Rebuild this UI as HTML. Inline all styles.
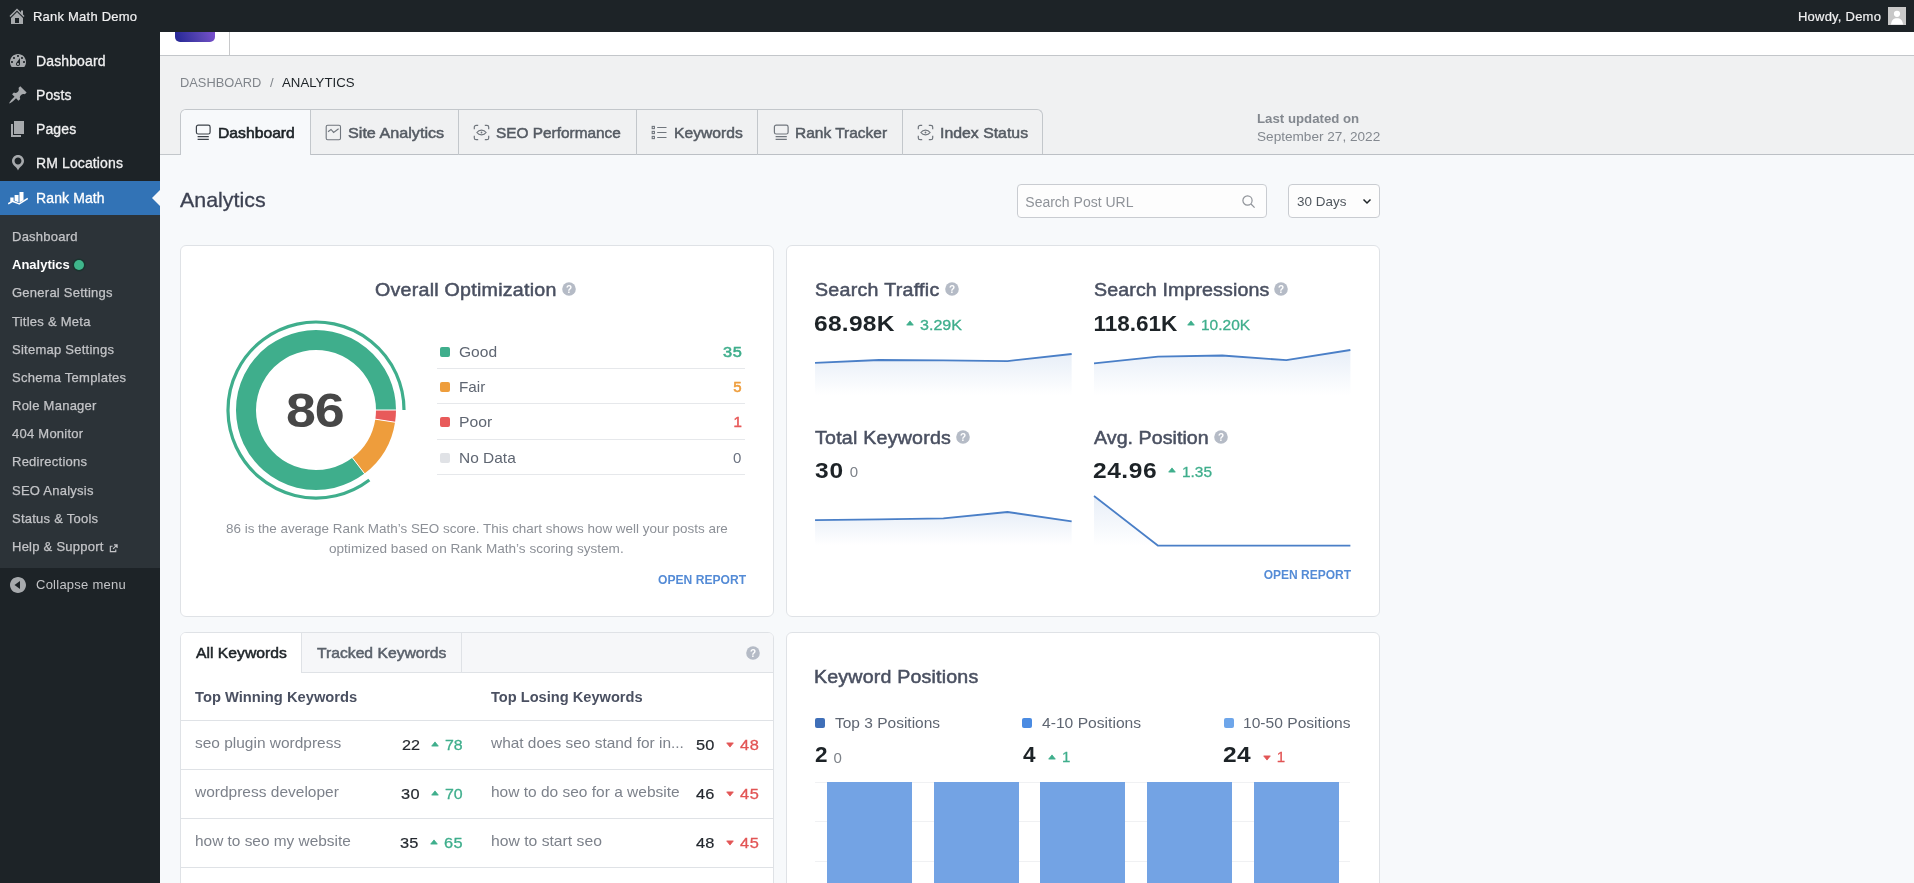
<!DOCTYPE html>
<html lang="en">
<head>
<meta charset="utf-8">
<title>Analytics ‹ Rank Math Demo — WordPress</title>
<style>
*{box-sizing:border-box;margin:0;padding:0}
html,body{width:1914px;height:883px;overflow:hidden}
body{position:relative;font-family:"Liberation Sans",Arial,sans-serif;font-size:13px;color:#3c434a;background:#f7f9fb}
.a{position:absolute;white-space:nowrap}
svg{display:block}
/* admin bar */
#bar{left:0;top:0;width:1914px;height:32px;background:#1d2327;z-index:5}
#bar .t{color:#f0f0f1;font-size:13px;line-height:32px;top:1px;letter-spacing:.22px;-webkit-text-stroke:.2px #f0f0f1}
/* sidebar */
#side{left:0;top:32px;width:160px;height:851px;background:#1d2327;z-index:4}
.mi{left:0;width:160px;height:34px;color:#f0f0f1;font-size:14px;line-height:34px;letter-spacing:.12px;-webkit-text-stroke:.3px #f0f0f1}
.mi span{position:absolute;left:36px;top:0}
.mi svg{position:absolute;left:8px;top:7px;width:20px;height:20px;fill:#a7aaad}
.mi.act{background:#3273b6;color:#fff;-webkit-text-stroke:.3px #fff}
.mi.act svg{fill:#fff}
#sub{left:0;top:183px;width:160px;height:353px;background:#2c3338}
.si{left:12px;height:28px;line-height:28px;font-size:13px;color:#c3c4c7;letter-spacing:.25px;-webkit-text-stroke:.25px #c3c4c7}
.si.cur{color:#fff;font-weight:700;letter-spacing:0;-webkit-text-stroke:0}
/* main */
#hdr{left:160px;top:32px;width:1754px;height:24px;background:#fff;border-bottom:1px solid #c3c6ca}
#top{left:160px;top:56px;width:1754px;height:99px;background:#f0f1f2;border-bottom:1px solid #bcc0c5}
.card{background:#fff;border:1px solid #dfe2e6;border-radius:6px}
</style>
</head>
<body>
<div id="wrap" style="position:absolute;left:0;top:0;width:1914px;height:883px;will-change:transform">
<!-- ADMIN BAR -->
<div id="bar" class="a">
  <svg class="a" style="left:7px;top:6px;width:20px;height:20px;fill:#a7aaad" viewBox="0 0 20 20"><path d="M16 8.5l1.53 1.53-1.06 1.06L10 4.62l-6.47 6.47-1.06-1.06L10 2.5l4 4v-2h2v4zm-6-2.46l6 5.99V18H4v-5.97zM12 17v-5H8v5h4z"/></svg>
  <div class="a t" style="left:33px">Rank Math Demo</div>
  <div class="a t" style="left:1798px">Howdy, Demo</div>
  <svg class="a" style="left:1888px;top:7px;width:18px;height:18px" viewBox="0 0 18 18"><rect width="18" height="18" fill="#c8c8c8"/><circle cx="9" cy="6.800" r="3.100" fill="#fff"/><path d="M3 17.500c.400-4.400 2.600-6.300 6-6.300s5.600 1.900 6 6.300z" fill="#fff"/></svg>
</div>
<!-- SIDEBAR -->
<div id="side" class="a">
  <div class="a mi" style="top:12px"><svg viewBox="0 0 20 20"><path d="M3.76 16h12.48c1.1-1.37 1.76-3.11 1.76-5 0-4.42-3.58-8-8-8s-8 3.58-8 8c0 1.89.66 3.63 1.76 5zM10 4c.55 0 1 .45 1 1s-.45 1-1 1-1-.45-1-1 .45-1 1-1zM6 6c.55 0 1 .45 1 1s-.45 1-1 1-1-.45-1-1 .45-1 1-1zm8 0c.55 0 1 .45 1 1s-.45 1-1 1-1-.45-1-1 .45-1 1-1zm-5.37 5.55L12 7v6c0 1.1-.9 2-2 2s-2-.9-2-2c0-.57.24-1.08.63-1.45zM4 10c.55 0 1 .45 1 1s-.45 1-1 1-1-.45-1-1 .45-1 1-1zm12 0c.55 0 1 .45 1 1s-.45 1-1 1-1-.45-1-1 .45-1 1-1zm-5 3c0-.55-.45-1-1-1s-1 .45-1 1 .45 1 1 1 1-.45 1-1z"/></svg><span>Dashboard</span></div>
  <div class="a mi" style="top:46px"><svg viewBox="0 0 20 20"><path d="M10.44 3.02l1.82-1.82 6.36 6.35-1.83 1.82c-1.05-.68-2.48-.57-3.41.36l-.75.75c-.92.93-1.04 2.35-.35 3.41l-1.83 1.82-2.41-2.41-2.8 2.79c-.42.42-3.38 2.71-3.8 2.29s1.860-3.390 2.280-3.810l2.790-2.790L4.100 9.360l1.830-1.820c1.050.690 2.480.570 3.400-.360l.750-.750c.930-.920 1.050-2.350.360-3.410z"/></svg><span>Posts</span></div>
  <div class="a mi" style="top:80px"><svg viewBox="0 0 20 20"><path d="M6 15V2h10v13H6zm-1 1h8v2H3V5h2v11z"/></svg><span>Pages</span></div>
  <div class="a mi" style="top:114px"><svg viewBox="0 0 20 20"><path d="M10 2C6.69 2 4 4.69 4 8c0 2.020 1.170 3.710 2.530 4.890.430.370 1.180.960 1.850 1.830.740.970 1.410 2.010 1.620 2.710.210-.700.880-1.740 1.620-2.710.670-.870 1.420-1.460 1.850-1.830C14.830 11.710 16 10.020 16 8c0-3.310-2.690-6-6-6zm0 2.560c1.900 0 3.440 1.540 3.440 3.440S11.900 11.440 10 11.440 6.560 9.900 6.560 8 8.100 4.560 10 4.560z"/></svg><span>RM Locations</span></div>
  <div class="a mi act" style="top:149px"><svg viewBox="0 0 20 20"><path d="M2.300 9.600h3.300v3.200l-3.300 1.200zM6.600 7h3.900v7.200l-3.900-1.400zM11.500 4h4v8.300l-4 2.100z"/><path d="M.200 15.800l4.200-2.500 6.800 2.600 8.600-5.500" fill="none" stroke="#fff" stroke-width="1.500" stroke-linejoin="round"/></svg><span>Rank Math</span>
    <svg class="a" style="left:152px;top:9px;width:8px;height:16px;fill:#f7f9fb" viewBox="0 0 8 16"><path d="M8 0v16L0 8z"/></svg></div>
  <div id="sub" class="a">
    <div class="a si" style="top:8px">Dashboard</div>
    <div class="a si cur" style="top:36px">Analytics <i style="display:inline-block;width:10px;height:10px;border-radius:50%;background:#3fb68b;vertical-align:-1px;margin-left:1px;box-shadow:0 0 0 1.500px rgba(24,52,46,.9)"></i></div>
    <div class="a si" style="top:64px">General Settings</div>
    <div class="a si" style="top:93px">Titles &amp; Meta</div>
    <div class="a si" style="top:121px">Sitemap Settings</div>
    <div class="a si" style="top:149px">Schema Templates</div>
    <div class="a si" style="top:177px">Role Manager</div>
    <div class="a si" style="top:205px">404 Monitor</div>
    <div class="a si" style="top:233px">Redirections</div>
    <div class="a si" style="top:262px">SEO Analysis</div>
    <div class="a si" style="top:290px">Status &amp; Tools</div>
    <div class="a si" style="top:318px">Help &amp; Support <svg style="display:inline-block;vertical-align:-1.500px;margin-left:1.500px;width:9px;height:9px" viewBox="0 0 10 10" fill="none" stroke="#c3c4c7" stroke-width="1.300"><path d="M7.500 6v2.500h-6v-6H4"/><path d="M5.500 1h3.500v3.500M9 1L4.500 5.500"/></svg></div>
  </div>
  <div class="a" style="left:0;top:536px;width:160px;height:34px;color:#a7aaad;font-size:13px;line-height:34px;letter-spacing:.25px">
    <svg class="a" style="left:8px;top:7px;width:20px;height:20px;fill:#a7aaad" viewBox="0 0 20 20"><path d="M10 2.020c-4.420 0-8 3.580-8 8s3.580 8 8 8 8-3.580 8-8-3.580-8-8-8zm2 12l-5.500-4 5.500-4v8z"/></svg>
    <span class="a" style="left:36px;top:0;color:#c3c4c7">Collapse menu</span>
  </div>
</div>
<!-- MAIN HEADER -->
<div id="hdr" class="a">
  <div class="a" style="left:15px;top:-30px;width:40px;height:40px;border-radius:5px;background:linear-gradient(72deg,#2b2b99 8%,#5b46b6 55%,#9156dd 100%)"></div>
  <div class="a" style="left:69px;top:0;width:1px;height:23px;background:#c8c9cb"></div>
</div>
<div id="top" class="a"></div>

<div class="a" style="left:180px;top:109px;width:863px;height:45px;border:1px solid #c3c7cb;border-bottom:0;border-radius:6px 6px 0 0;background:#f0f1f2"></div>
<div class="a" style="left:181px;top:110px;width:129px;height:45px;border-radius:5px 0 0 0;background:#f7f9fb"></div>
<div class="a" style="left:160px;top:154px;width:21px;height:1px;background:#c3c7cb"></div>
<div class="a" style="left:310px;top:110px;width:1px;height:45px;background:#c3c7cb"></div>
<div class="a" style="left:458px;top:110px;width:1px;height:45px;background:#c3c7cb"></div>
<div class="a" style="left:636px;top:110px;width:1px;height:45px;background:#c3c7cb"></div>
<div class="a" style="left:757px;top:110px;width:1px;height:45px;background:#c3c7cb"></div>
<div class="a" style="left:902px;top:110px;width:1px;height:45px;background:#c3c7cb"></div>
<svg class="a" style="left:195px;top:124px;width:16px;height:17px" viewBox="0 0 16 17" fill="none" stroke="#3c4249" stroke-width="1.2"><rect x="1.400" y="1.200" width="13.700" height="8.800" rx="1.800"/><path d="M2.600 12.600h11.200M2.600 15.400h11.200"/></svg>
<svg class="a" style="left:325px;top:124px;width:17px;height:17px" viewBox="0 0 17 17" fill="none" stroke="#70767d" stroke-width="1.1"><rect x="1.200" y="1.200" width="14.300" height="14.500" rx="1.500"/><path d="M3 7.800l3-2.300 2.600 2.900 5-3.600"/></svg>
<svg class="a" style="left:473px;top:124px;width:17px;height:17px" viewBox="0 0 17 17" fill="none" stroke="#70767d" stroke-width="1.2"><path d="M1.300 5.200V3.100a1.800 1.800 0 0 1 1.800-1.800h2.100M11.800 1.300h2.100a1.800 1.800 0 0 1 1.800 1.800v2.100M15.700 11.800v2.100a1.800 1.800 0 0 1-1.800 1.800h-2.100M5.200 15.700H3.100a1.800 1.800 0 0 1-1.800-1.800v-2.100"/><path d="M3.900 8.500c1.100-1.600 2.700-2.400 4.600-2.400s3.500.800 4.600 2.400c-1.100 1.600-2.700 2.400-4.600 2.400s-3.500-.800-4.600-2.400z"/><circle cx="8.500" cy="8.500" r="0.900" fill="#70767d" stroke="none"/></svg>
<svg class="a" style="left:650px;top:124px;width:17px;height:17px" viewBox="0 0 17 17" fill="none" stroke="#70767d" stroke-width="1.1"><rect x="2.200" y="2.400" width="2.200" height="2.200"/><rect x="2.200" y="7.400" width="2.200" height="2.200"/><rect x="2.200" y="12.400" width="2.200" height="2.200"/><path d="M7.200 3.500h9.300M7.200 8.500h9.300M7.200 13.500h9.300"/></svg>
<svg class="a" style="left:773px;top:124px;width:16px;height:17px" viewBox="0 0 16 17" fill="none" stroke="#70767d" stroke-width="1.2"><rect x="1.400" y="1.200" width="13.700" height="8.800" rx="1.800"/><path d="M2.600 12.600h11.200M2.600 15.400h11.200"/></svg>
<svg class="a" style="left:917px;top:124px;width:17px;height:17px" viewBox="0 0 17 17" fill="none" stroke="#70767d" stroke-width="1.2"><path d="M1.300 5.200V3.100a1.800 1.800 0 0 1 1.800-1.800h2.100M11.800 1.300h2.100a1.800 1.800 0 0 1 1.800 1.800v2.100M15.700 11.800v2.100a1.800 1.800 0 0 1-1.800 1.800h-2.100M5.200 15.700H3.100a1.800 1.800 0 0 1-1.800-1.800v-2.100"/><path d="M3.900 8.500c1.100-1.600 2.700-2.400 4.600-2.400s3.500.800 4.600 2.400c-1.100 1.600-2.700 2.400-4.600 2.400s-3.500-.800-4.600-2.400z"/><circle cx="8.500" cy="8.500" r="0.900" fill="#70767d" stroke="none"/></svg>
<div class="a" style="left:1017px;top:184px;width:250px;height:34px;border:1px solid #c9ccd1;border-radius:4px;background:#fdfdfd"></div>
<svg class="a" style="left:1241px;top:194px;width:15px;height:15px" viewBox="0 0 15 15" fill="none" stroke="#8f9399" stroke-width="1.2"><circle cx="6.500" cy="6.500" r="4.600"/><path d="M10 10l3.600 3.600"/></svg>
<div class="a" style="left:1288px;top:184px;width:92px;height:34px;border:1px solid #c9ccd1;border-radius:4px;background:#fdfdfd"></div>
<svg class="a" style="left:1362px;top:198px;width:10px;height:7px" viewBox="0 0 10 7" fill="none" stroke="#1d2327" stroke-width="1.500"><path d="M1.500 1.500L5 5l3.500-3.500"/></svg>
<div class="a card" style="left:180px;top:245px;width:594px;height:372px"></div>
<div class="a card" style="left:786px;top:245px;width:594px;height:372px"></div>
<div class="a card" style="left:180px;top:632px;width:594px;height:300px"></div>
<div class="a card" style="left:786px;top:632px;width:594px;height:300px"></div>
<svg class="a" style="left:561.5px;top:282px;width:14px;height:14px" viewBox="0 0 14 14"><circle cx="7" cy="7" r="6.800" fill="#b5bbc6"/><text x="7" y="10.600" text-anchor="middle" font-family="Liberation Sans,sans-serif" font-weight="700" font-size="10" fill="#fff">?</text></svg>
<svg class="a" style="left:216px;top:310px;width:200px;height:200px" viewBox="216 310 200 200" fill="none"><path d="M386.00 410.00A70 70 0 1 0 358.44 465.67" stroke="#3fae8c" stroke-width="20"/><path d="M358.44 465.67A70 70 0 0 0 385.18 420.69" stroke="#ee9d3c" stroke-width="20"/><path d="M385.18 420.69A70 70 0 0 0 386.00 410.00" stroke="#e85a5a" stroke-width="20"/><path d="M375.50 410.00L396.50 410.00" stroke="#fff" stroke-width="1"/><path d="M352.07 457.32L364.80 474.02" stroke="#fff" stroke-width="1"/><path d="M374.80 419.08L395.56 422.29" stroke="#fff" stroke-width="1"/><path d="M404.00 410.00A88 88 0 1 0 369.35 479.99" stroke="#3fae8c" stroke-width="3.200"/></svg>
<div class="a" style="left:286px;top:387px;font-size:48px;line-height:48px;font-weight:700;color:#474747;transform:scaleX(1.12);transform-origin:0 0;letter-spacing:-1px">86</div>
<div class="a" style="left:440px;top:346.7px;width:10px;height:10px;border-radius:2px;background:#3fae8c"></div>
<div class="a" style="left:440px;top:381.6px;width:10px;height:10px;border-radius:2px;background:#ee9d3c"></div>
<div class="a" style="left:440px;top:416.5px;width:10px;height:10px;border-radius:2px;background:#e85a5a"></div>
<div class="a" style="left:440px;top:452.7px;width:10px;height:10px;border-radius:2px;background:#e0e2e6"></div>
<div class="a" style="left:437px;top:368px;width:308px;height:1px;background:#e6e8eb"></div>
<div class="a" style="left:437px;top:403px;width:308px;height:1px;background:#e6e8eb"></div>
<div class="a" style="left:437px;top:439px;width:308px;height:1px;background:#e6e8eb"></div>
<div class="a" style="left:437px;top:474px;width:308px;height:1px;background:#e6e8eb"></div>
<svg class="a" style="left:813.2px;top:350.8px;width:260.7px;height:46.2px" viewBox="813.2 350.8 260.7 46.2"><defs><linearGradient id="g1" gradientUnits="userSpaceOnUse" x1="0" y1="353.8" x2="0" y2="395"><stop offset="0" stop-color="#4a7fc7" stop-opacity="0.13"/><stop offset="1" stop-color="#4a7fc7" stop-opacity="0"/></linearGradient></defs><polygon points="815.2,395 815.2,362.6 879.4,359.8 943.6,360.1 1007.7,360.9 1071.9,353.8 1071.9,395" fill="url(#g1)"/><polyline points="815.2,362.6 879.4,359.8 943.6,360.1 1007.7,360.9 1071.9,353.8" fill="none" stroke="#4a7fc7" stroke-width="1.800" stroke-linejoin="round"/></svg>
<svg class="a" style="left:1092.4px;top:346.6px;width:260.4px;height:50.4px" viewBox="1092.4 346.6 260.4 50.4"><defs><linearGradient id="g2" gradientUnits="userSpaceOnUse" x1="0" y1="349.6" x2="0" y2="395"><stop offset="0" stop-color="#4a7fc7" stop-opacity="0.13"/><stop offset="1" stop-color="#4a7fc7" stop-opacity="0"/></linearGradient></defs><polygon points="1094.4,395 1094.4,362.9 1158.5,356.3 1222.6,355.1 1286.7,359.8 1350.8,349.6 1350.8,395" fill="url(#g2)"/><polyline points="1094.4,362.9 1158.5,356.3 1222.6,355.1 1286.7,359.8 1350.8,349.6" fill="none" stroke="#4a7fc7" stroke-width="1.800" stroke-linejoin="round"/></svg>
<svg class="a" style="left:813.2px;top:508.8px;width:260.7px;height:38.2px" viewBox="813.2 508.8 260.7 38.2"><defs><linearGradient id="g3" gradientUnits="userSpaceOnUse" x1="0" y1="511.8" x2="0" y2="545"><stop offset="0" stop-color="#4a7fc7" stop-opacity="0.13"/><stop offset="1" stop-color="#4a7fc7" stop-opacity="0"/></linearGradient></defs><polygon points="815.2,545 815.2,520.0 879.4,519.2 943.6,518.1 1007.7,511.8 1071.9,521.1 1071.9,545" fill="url(#g3)"/><polyline points="815.2,520.0 879.4,519.2 943.6,518.1 1007.7,511.8 1071.9,521.1" fill="none" stroke="#4a7fc7" stroke-width="1.800" stroke-linejoin="round"/></svg>
<svg class="a" style="left:1092.4px;top:493.1px;width:260.4px;height:54.9px" viewBox="1092.4 493.1 260.4 54.9"><defs><linearGradient id="g4" gradientUnits="userSpaceOnUse" x1="0" y1="496.1" x2="0" y2="546"><stop offset="0" stop-color="#4a7fc7" stop-opacity="0.13"/><stop offset="1" stop-color="#4a7fc7" stop-opacity="0"/></linearGradient></defs><polygon points="1094.4,546 1094.4,496.1 1158.5,545.8 1222.6,545.8 1286.7,545.8 1350.8,545.8 1350.8,546" fill="url(#g4)"/><polyline points="1094.4,496.1 1158.5,545.8 1222.6,545.8 1286.7,545.8 1350.8,545.8" fill="none" stroke="#4a7fc7" stroke-width="1.800" stroke-linejoin="round"/></svg>
<svg class="a" style="left:945.2px;top:282px;width:14px;height:14px" viewBox="0 0 14 14"><circle cx="7" cy="7" r="6.800" fill="#b5bbc6"/><text x="7" y="10.600" text-anchor="middle" font-family="Liberation Sans,sans-serif" font-weight="700" font-size="10" fill="#fff">?</text></svg>
<svg class="a" style="left:905.7px;top:320.3px;width:8px;height:6px" viewBox="0 0 8 6"><path d="M4 0.900L7.300 5.100H0.700z" fill="#3fae8c" stroke="#3fae8c" stroke-width="0.800" stroke-linejoin="round"/></svg>
<svg class="a" style="left:1274.2px;top:282px;width:14px;height:14px" viewBox="0 0 14 14"><circle cx="7" cy="7" r="6.800" fill="#b5bbc6"/><text x="7" y="10.600" text-anchor="middle" font-family="Liberation Sans,sans-serif" font-weight="700" font-size="10" fill="#fff">?</text></svg>
<svg class="a" style="left:1187.2px;top:320.3px;width:8px;height:6px" viewBox="0 0 8 6"><path d="M4 0.900L7.300 5.100H0.700z" fill="#3fae8c" stroke="#3fae8c" stroke-width="0.800" stroke-linejoin="round"/></svg>
<svg class="a" style="left:956.2px;top:430px;width:14px;height:14px" viewBox="0 0 14 14"><circle cx="7" cy="7" r="6.800" fill="#b5bbc6"/><text x="7" y="10.600" text-anchor="middle" font-family="Liberation Sans,sans-serif" font-weight="700" font-size="10" fill="#fff">?</text></svg>
<svg class="a" style="left:1214.2px;top:430px;width:14px;height:14px" viewBox="0 0 14 14"><circle cx="7" cy="7" r="6.800" fill="#b5bbc6"/><text x="7" y="10.600" text-anchor="middle" font-family="Liberation Sans,sans-serif" font-weight="700" font-size="10" fill="#fff">?</text></svg>
<svg class="a" style="left:1167.7px;top:467.3px;width:8px;height:6px" viewBox="0 0 8 6"><path d="M4 0.900L7.300 5.100H0.700z" fill="#3fae8c" stroke="#3fae8c" stroke-width="0.800" stroke-linejoin="round"/></svg>
<div class="a" style="left:181px;top:633px;width:592px;height:40px;background:#f6f7f9;border-bottom:1px solid #dfe2e6;border-radius:5px 5px 0 0"></div>
<div class="a" style="left:181px;top:633px;width:121px;height:40px;background:#fff;border-right:1px solid #dfe2e6;border-radius:5px 0 0 0"></div>
<div class="a" style="left:461px;top:633px;width:1px;height:39px;background:#dfe2e6"></div>
<svg class="a" style="left:746px;top:646px;width:14px;height:14px" viewBox="0 0 14 14"><circle cx="7" cy="7" r="6.800" fill="#b5bbc6"/><text x="7" y="10.600" text-anchor="middle" font-family="Liberation Sans,sans-serif" font-weight="700" font-size="10" fill="#fff">?</text></svg>
<div class="a" style="left:181px;top:720px;width:592px;height:1px;background:#dfe2e6"></div>
<div class="a" style="left:181px;top:769px;width:592px;height:1px;background:#dfe2e6"></div>
<div class="a" style="left:181px;top:818px;width:592px;height:1px;background:#dfe2e6"></div>
<div class="a" style="left:181px;top:867px;width:592px;height:1px;background:#dfe2e6"></div>
<svg class="a" style="left:431.1px;top:740.8px;width:8px;height:6px" viewBox="0 0 8 6"><path d="M4 0.900L7.300 5.100H0.700z" fill="#3fae8c" stroke="#3fae8c" stroke-width="0.800" stroke-linejoin="round"/></svg>
<svg class="a" style="left:431.1px;top:789.8px;width:8px;height:6px" viewBox="0 0 8 6"><path d="M4 0.900L7.300 5.100H0.700z" fill="#3fae8c" stroke="#3fae8c" stroke-width="0.800" stroke-linejoin="round"/></svg>
<svg class="a" style="left:430.1px;top:838.8px;width:8px;height:6px" viewBox="0 0 8 6"><path d="M4 0.900L7.300 5.100H0.700z" fill="#3fae8c" stroke="#3fae8c" stroke-width="0.800" stroke-linejoin="round"/></svg>
<svg class="a" style="left:725.9px;top:741.5px;width:8px;height:6px" viewBox="0 0 8 6"><path d="M0.700 0.900H7.300L4 5.100z" fill="#e25555" stroke="#e25555" stroke-width="0.800" stroke-linejoin="round"/></svg>
<svg class="a" style="left:725.9px;top:790.5px;width:8px;height:6px" viewBox="0 0 8 6"><path d="M0.700 0.900H7.300L4 5.100z" fill="#e25555" stroke="#e25555" stroke-width="0.800" stroke-linejoin="round"/></svg>
<svg class="a" style="left:725.9px;top:839.5px;width:8px;height:6px" viewBox="0 0 8 6"><path d="M0.700 0.900H7.300L4 5.100z" fill="#e25555" stroke="#e25555" stroke-width="0.800" stroke-linejoin="round"/></svg>
<div class="a" style="left:815px;top:718px;width:10px;height:10px;border-radius:2px;background:#3f6fb8"></div>
<div class="a" style="left:1022.3px;top:718px;width:10px;height:10px;border-radius:2px;background:#4a8be2"></div>
<div class="a" style="left:1223.8px;top:718px;width:10px;height:10px;border-radius:2px;background:#6ea6ea"></div>
<svg class="a" style="left:1048.2px;top:753.8px;width:8px;height:6px" viewBox="0 0 8 6"><path d="M4 0.900L7.300 5.100H0.700z" fill="#3fae8c" stroke="#3fae8c" stroke-width="0.800" stroke-linejoin="round"/></svg>
<svg class="a" style="left:1262.7px;top:754.5px;width:8px;height:6px" viewBox="0 0 8 6"><path d="M0.700 0.900H7.300L4 5.100z" fill="#e25555" stroke="#e25555" stroke-width="0.800" stroke-linejoin="round"/></svg>
<div class="a" style="left:815px;top:782px;width:535px;height:1px;background:#f0f1f3"></div>
<div class="a" style="left:815px;top:821px;width:535px;height:1px;background:#f0f1f3"></div>
<div class="a" style="left:815px;top:861px;width:535px;height:1px;background:#f0f1f3"></div>
<div class="a" style="left:827px;top:782px;width:85px;height:110px;background:#73a3e4"></div>
<div class="a" style="left:933.6px;top:782px;width:85px;height:110px;background:#73a3e4"></div>
<div class="a" style="left:1040.4px;top:782px;width:85px;height:110px;background:#73a3e4"></div>
<div class="a" style="left:1147px;top:782px;width:85px;height:110px;background:#73a3e4"></div>
<div class="a" style="left:1253.9px;top:782px;width:85px;height:110px;background:#73a3e4"></div>
<div class="a" style="left:180.0px;top:76.2px;font-size:13px;line-height:13px;color:#80858b;transform:scaleX(0.988);transform-origin:0 50%">DASHBOARD</div>
<div class="a" style="left:270.0px;top:76.2px;font-size:13px;line-height:13px;color:#80858b">/</div>
<div class="a" style="left:282.4px;top:76.2px;font-size:13px;line-height:13px;color:#1d2327;transform:scaleX(1.018);transform-origin:0 50%">ANALYTICS</div>
<div class="a" style="left:218.1px;top:125.2px;font-size:15px;line-height:15px;color:#1d2327;transform:scaleX(1.047);transform-origin:0 50%;-webkit-text-stroke:0.6px #1d2327">Dashboard</div>
<div class="a" style="left:347.5px;top:125.2px;font-size:15px;line-height:15px;color:#555b63;transform:scaleX(1.078);transform-origin:0 50%;-webkit-text-stroke:0.5px #555b63">Site Analytics</div>
<div class="a" style="left:495.8px;top:125.2px;font-size:15px;line-height:15px;color:#555b63;transform:scaleX(1.026);transform-origin:0 50%;-webkit-text-stroke:0.5px #555b63">SEO Performance</div>
<div class="a" style="left:673.6px;top:125.2px;font-size:15px;line-height:15px;color:#555b63;transform:scaleX(1.044);transform-origin:0 50%;-webkit-text-stroke:0.5px #555b63">Keywords</div>
<div class="a" style="left:795.1px;top:125.2px;font-size:15px;line-height:15px;color:#555b63;transform:scaleX(1.033);transform-origin:0 50%;-webkit-text-stroke:0.5px #555b63">Rank Tracker</div>
<div class="a" style="left:939.8px;top:125.2px;font-size:15px;line-height:15px;color:#555b63;transform:scaleX(1.056);transform-origin:0 50%;-webkit-text-stroke:0.5px #555b63">Index Status</div>
<div class="a" style="left:1257.0px;top:112.1px;font-size:13px;line-height:13px;color:#83888f;font-weight:700;transform:scaleX(1.018);transform-origin:0 50%">Last updated on</div>
<div class="a" style="left:1257.0px;top:129.7px;font-size:13px;line-height:13px;color:#83888f;transform:scaleX(1.046);transform-origin:0 50%">September 27, 2022</div>
<div class="a" style="left:179.6px;top:189.0px;font-size:21px;line-height:21px;color:#3d4252;transform:scaleX(1.020);transform-origin:0 50%;-webkit-text-stroke:0.3px #3d4252">Analytics</div>
<div class="a" style="left:1025.3px;top:194.7px;font-size:14px;line-height:14px;color:#8f9399">Search Post URL</div>
<div class="a" style="left:1297.2px;top:195.2px;font-size:13px;line-height:13px;color:#50575e;transform:scaleX(1.035);transform-origin:0 50%">30 Days</div>
<div class="a" style="left:374.8px;top:280.5px;font-size:18px;line-height:18px;color:#4a5061;letter-spacing:0.23px;transform:scaleX(1.090);transform-origin:0 50%;-webkit-text-stroke:0.5px #4a5061">Overall Optimization</div>
<div class="a" style="left:459.4px;top:344.4px;font-size:15px;line-height:15px;color:#5f6672;transform:scaleX(1.037);transform-origin:0 50%">Good</div>
<div class="a" style="left:459.4px;top:379.3px;font-size:15px;line-height:15px;color:#5f6672;transform:scaleX(1.016);transform-origin:0 50%">Fair</div>
<div class="a" style="left:459.4px;top:414.2px;font-size:15px;line-height:15px;color:#5f6672;transform:scaleX(1.049);transform-origin:0 50%">Poor</div>
<div class="a" style="left:459.4px;top:450.4px;font-size:15px;line-height:15px;color:#5f6672;transform:scaleX(1.031);transform-origin:0 50%">No Data</div>
<div class="a" style="left:723.0px;top:344.4px;font-size:15px;line-height:15px;color:#3fae8c;letter-spacing:0.62px;transform:scaleX(1.090);transform-origin:0 50%;-webkit-text-stroke:0.55px #3fae8c">35</div>
<div class="a" style="left:733.2px;top:379.3px;font-size:15px;line-height:15px;color:#ee9d3c;-webkit-text-stroke:0.55px #ee9d3c">5</div>
<div class="a" style="left:733.6px;top:414.2px;font-size:15px;line-height:15px;color:#e85a5a;-webkit-text-stroke:0.55px #e85a5a">1</div>
<div class="a" style="left:733.0px;top:450.4px;font-size:15px;line-height:15px;color:#6b7280">0</div>
<div class="a" style="left:225.9px;top:522.1px;font-size:13px;line-height:13px;color:#8c9097;transform:scaleX(1.033);transform-origin:0 50%">86 is the average Rank Math’s SEO score. This chart shows how well your posts are</div>
<div class="a" style="left:329.3px;top:541.7px;font-size:13px;line-height:13px;color:#8c9097;transform:scaleX(1.044);transform-origin:0 50%">optimized based on Rank Math’s scoring system.</div>
<div class="a" style="left:657.5px;top:573.5px;font-size:12px;line-height:12px;color:#548bd6;font-weight:700;transform:scaleX(1.008);transform-origin:0 50%">OPEN REPORT</div>
<div class="a" style="left:814.5px;top:280.5px;font-size:18px;line-height:18px;color:#4a5061;letter-spacing:0.25px;transform:scaleX(1.090);transform-origin:0 50%;-webkit-text-stroke:0.5px #4a5061">Search Traffic</div>
<div class="a" style="left:814.3px;top:312.6px;font-size:22.5px;line-height:22.5px;color:#1d2327;font-weight:700;letter-spacing:0.26px;transform:scaleX(1.090);transform-origin:0 50%">68.98K</div>
<div class="a" style="left:919.7px;top:316.7px;font-size:15px;line-height:15px;color:#3fae8c;transform:scaleX(1.070);transform-origin:0 50%;-webkit-text-stroke:0.3px #3fae8c">3.29K</div>
<div class="a" style="left:1093.6px;top:280.5px;font-size:18px;line-height:18px;color:#4a5061;letter-spacing:0.10px;transform:scaleX(1.090);transform-origin:0 50%;-webkit-text-stroke:0.5px #4a5061">Search Impressions</div>
<div class="a" style="left:1093.4px;top:312.6px;font-size:22.5px;line-height:22.5px;color:#1d2327;font-weight:700">118.61K</div>
<div class="a" style="left:1201.0px;top:316.7px;font-size:15px;line-height:15px;color:#3fae8c;transform:scaleX(1.032);transform-origin:0 50%;-webkit-text-stroke:0.3px #3fae8c">10.20K</div>
<div class="a" style="left:814.5px;top:428.7px;font-size:18px;line-height:18px;color:#4a5061;letter-spacing:0.20px;transform:scaleX(1.090);transform-origin:0 50%;-webkit-text-stroke:0.5px #4a5061">Total Keywords</div>
<div class="a" style="left:814.8px;top:459.6px;font-size:22.5px;line-height:22.5px;color:#1d2327;font-weight:700;letter-spacing:0.87px;transform:scaleX(1.090);transform-origin:0 50%">30</div>
<div class="a" style="left:849.8px;top:464.2px;font-size:15px;line-height:15px;color:#7d8289">0</div>
<div class="a" style="left:1093.6px;top:428.7px;font-size:18px;line-height:18px;color:#4a5061;letter-spacing:0.04px;transform:scaleX(1.090);transform-origin:0 50%;-webkit-text-stroke:0.5px #4a5061">Avg. Position</div>
<div class="a" style="left:1093.4px;top:459.6px;font-size:22.5px;line-height:22.5px;color:#1d2327;font-weight:700;letter-spacing:0.50px;transform:scaleX(1.090);transform-origin:0 50%">24.96</div>
<div class="a" style="left:1181.6px;top:463.7px;font-size:15px;line-height:15px;color:#3fae8c;transform:scaleX(1.029);transform-origin:0 50%;-webkit-text-stroke:0.3px #3fae8c">1.35</div>
<div class="a" style="left:1263.7px;top:568.8px;font-size:12px;line-height:12px;color:#548bd6;font-weight:700">OPEN REPORT</div>
<div class="a" style="left:195.9px;top:645.4px;font-size:15px;line-height:15px;color:#1d2327;transform:scaleX(1.047);transform-origin:0 50%;-webkit-text-stroke:0.5px #1d2327">All Keywords</div>
<div class="a" style="left:317.3px;top:645.4px;font-size:15px;line-height:15px;color:#5a616b;transform:scaleX(1.046);transform-origin:0 50%;-webkit-text-stroke:0.5px #5a616b">Tracked Keywords</div>
<div class="a" style="left:195.3px;top:690.1px;font-size:14px;line-height:14px;color:#4a5061;font-weight:700;transform:scaleX(1.051);transform-origin:0 50%">Top Winning Keywords</div>
<div class="a" style="left:490.7px;top:690.1px;font-size:14px;line-height:14px;color:#4a5061;font-weight:700;transform:scaleX(1.044);transform-origin:0 50%">Top Losing Keywords</div>
<div class="a" style="left:195.2px;top:735.2px;font-size:15px;line-height:15px;color:#7d828b;transform:scaleX(1.031);transform-origin:0 50%">seo plugin wordpress</div>
<div class="a" style="left:401.7px;top:736.6px;font-size:15px;line-height:15px;color:#24292f;transform:scaleX(1.079);transform-origin:0 50%;-webkit-text-stroke:0.2px #24292f">22</div>
<div class="a" style="left:445.1px;top:736.6px;font-size:15px;line-height:15px;color:#3fae8c;transform:scaleX(1.061);transform-origin:0 50%;-webkit-text-stroke:0.3px #3fae8c">78</div>
<div class="a" style="left:195.2px;top:784.2px;font-size:15px;line-height:15px;color:#7d828b;transform:scaleX(1.033);transform-origin:0 50%">wordpress developer</div>
<div class="a" style="left:401.0px;top:785.6px;font-size:15px;line-height:15px;color:#24292f;letter-spacing:0.31px;transform:scaleX(1.090);transform-origin:0 50%;-webkit-text-stroke:0.2px #24292f">30</div>
<div class="a" style="left:445.1px;top:785.6px;font-size:15px;line-height:15px;color:#3fae8c;transform:scaleX(1.061);transform-origin:0 50%;-webkit-text-stroke:0.3px #3fae8c">70</div>
<div class="a" style="left:195.2px;top:833.2px;font-size:15px;line-height:15px;color:#7d828b;transform:scaleX(1.027);transform-origin:0 50%">how to seo my website</div>
<div class="a" style="left:400.3px;top:834.6px;font-size:15px;line-height:15px;color:#24292f;letter-spacing:0.19px;transform:scaleX(1.090);transform-origin:0 50%;-webkit-text-stroke:0.2px #24292f">35</div>
<div class="a" style="left:444.1px;top:834.6px;font-size:15px;line-height:15px;color:#3fae8c;letter-spacing:0.31px;transform:scaleX(1.090);transform-origin:0 50%;-webkit-text-stroke:0.3px #3fae8c">65</div>
<div class="a" style="left:490.6px;top:735.2px;font-size:15px;line-height:15px;color:#7d828b;transform:scaleX(1.028);transform-origin:0 50%">what does seo stand for in...</div>
<div class="a" style="left:695.8px;top:736.6px;font-size:15px;line-height:15px;color:#24292f;letter-spacing:0.13px;transform:scaleX(1.090);transform-origin:0 50%;-webkit-text-stroke:0.2px #24292f">50</div>
<div class="a" style="left:739.8px;top:736.6px;font-size:15px;line-height:15px;color:#e25555;letter-spacing:0.56px;transform:scaleX(1.090);transform-origin:0 50%;-webkit-text-stroke:0.3px #e25555">48</div>
<div class="a" style="left:490.6px;top:784.2px;font-size:15px;line-height:15px;color:#7d828b;transform:scaleX(1.033);transform-origin:0 50%">how to do seo for a website</div>
<div class="a" style="left:695.8px;top:785.6px;font-size:15px;line-height:15px;color:#24292f;letter-spacing:0.13px;transform:scaleX(1.090);transform-origin:0 50%;-webkit-text-stroke:0.2px #24292f">46</div>
<div class="a" style="left:739.8px;top:785.6px;font-size:15px;line-height:15px;color:#e25555;letter-spacing:0.56px;transform:scaleX(1.090);transform-origin:0 50%;-webkit-text-stroke:0.3px #e25555">45</div>
<div class="a" style="left:490.6px;top:833.2px;font-size:15px;line-height:15px;color:#7d828b;transform:scaleX(1.047);transform-origin:0 50%">how to start seo</div>
<div class="a" style="left:695.8px;top:834.6px;font-size:15px;line-height:15px;color:#24292f;letter-spacing:0.13px;transform:scaleX(1.090);transform-origin:0 50%;-webkit-text-stroke:0.2px #24292f">48</div>
<div class="a" style="left:739.8px;top:834.6px;font-size:15px;line-height:15px;color:#e25555;letter-spacing:0.56px;transform:scaleX(1.090);transform-origin:0 50%;-webkit-text-stroke:0.3px #e25555">45</div>
<div class="a" style="left:814.2px;top:667.7px;font-size:18px;line-height:18px;color:#4a5061;letter-spacing:0.16px;transform:scaleX(1.090);transform-origin:0 50%;-webkit-text-stroke:0.5px #4a5061">Keyword Positions</div>
<div class="a" style="left:835.0px;top:715.2px;font-size:15px;line-height:15px;color:#5f6672;transform:scaleX(1.033);transform-origin:0 50%">Top 3 Positions</div>
<div class="a" style="left:1041.7px;top:715.2px;font-size:15px;line-height:15px;color:#5f6672;transform:scaleX(1.043);transform-origin:0 50%">4-10 Positions</div>
<div class="a" style="left:1243.2px;top:715.2px;font-size:15px;line-height:15px;color:#5f6672;transform:scaleX(1.040);transform-origin:0 50%">10-50 Positions</div>
<div class="a" style="left:815.0px;top:744.0px;font-size:22.5px;line-height:22.5px;color:#1d2327;font-weight:700">2</div>
<div class="a" style="left:833.5px;top:749.7px;font-size:15px;line-height:15px;color:#7d8289">0</div>
<div class="a" style="left:1023.0px;top:744.0px;font-size:22.5px;line-height:22.5px;color:#1d2327;font-weight:700">4</div>
<div class="a" style="left:1062.0px;top:749.2px;font-size:15px;line-height:15px;color:#3fae8c;-webkit-text-stroke:0.3px #3fae8c">1</div>
<div class="a" style="left:1223.3px;top:744.0px;font-size:22.5px;line-height:22.5px;color:#1d2327;font-weight:700;letter-spacing:0.32px;transform:scaleX(1.090);transform-origin:0 50%">24</div>
<div class="a" style="left:1276.8px;top:749.2px;font-size:15px;line-height:15px;color:#e25555;-webkit-text-stroke:0.3px #e25555">1</div>
</div>
</body>
</html>
